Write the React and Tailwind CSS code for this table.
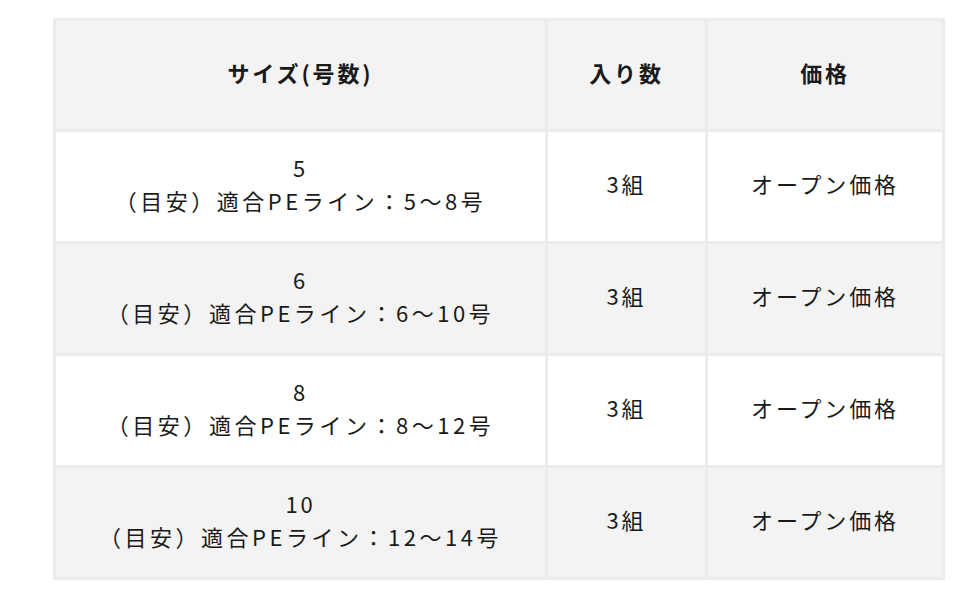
import React from "react";

const rows = [
  { size: "5", line: "（目安）適合PEライン：5〜8号", bg: "bg-white" },
  { size: "6", line: "（目安）適合PEライン：6〜10号", bg: "bg-[#f3f3f3]" },
  { size: "8", line: "（目安）適合PEライン：8〜12号", bg: "bg-white" },
  { size: "10", line: "（目安）適合PEライン：12〜14号", bg: "bg-[#f3f3f3]" },
];

const Cell = ({ className = "", children }) => (
  <div
    className={`flex flex-col items-center justify-center pb-[6px] text-center ${className}`}
  >
    {children}
  </div>
);

const App = () => {
  return (
    <div
      className="w-[962px] h-[598px] bg-white pt-[18px] pl-[53px] text-[#1a1a1a] text-[22px] leading-[33px] tracking-[0.13em]"
      style={{ fontFamily: '"Noto Sans CJK JP", "Noto Sans", sans-serif' }}
    >
      <div className="w-[892px] grid grid-cols-[489px_157px_234px] gap-[3px] p-[3px] bg-[#ebebeb]">
        <Cell className="h-[108px] bg-[#f3f3f3] font-bold">サイズ(号数)</Cell>
        <Cell className="h-[108px] bg-[#f3f3f3] font-bold">入り数</Cell>
        <Cell className="h-[108px] bg-[#f3f3f3] font-bold">価格</Cell>
        {rows.map((r) => (
          <React.Fragment key={r.size}>
            <Cell className={`h-[109px] ${r.bg}`}>
              <span>{r.size}</span>
              <span className="tracking-[0.16em]">{r.line}</span>
            </Cell>
            <Cell className={`h-[109px] ${r.bg}`}>3組</Cell>
            <Cell className={`h-[109px] ${r.bg}`}>オープン価格</Cell>
          </React.Fragment>
        ))}
      </div>
    </div>
  );
};

export default App;
